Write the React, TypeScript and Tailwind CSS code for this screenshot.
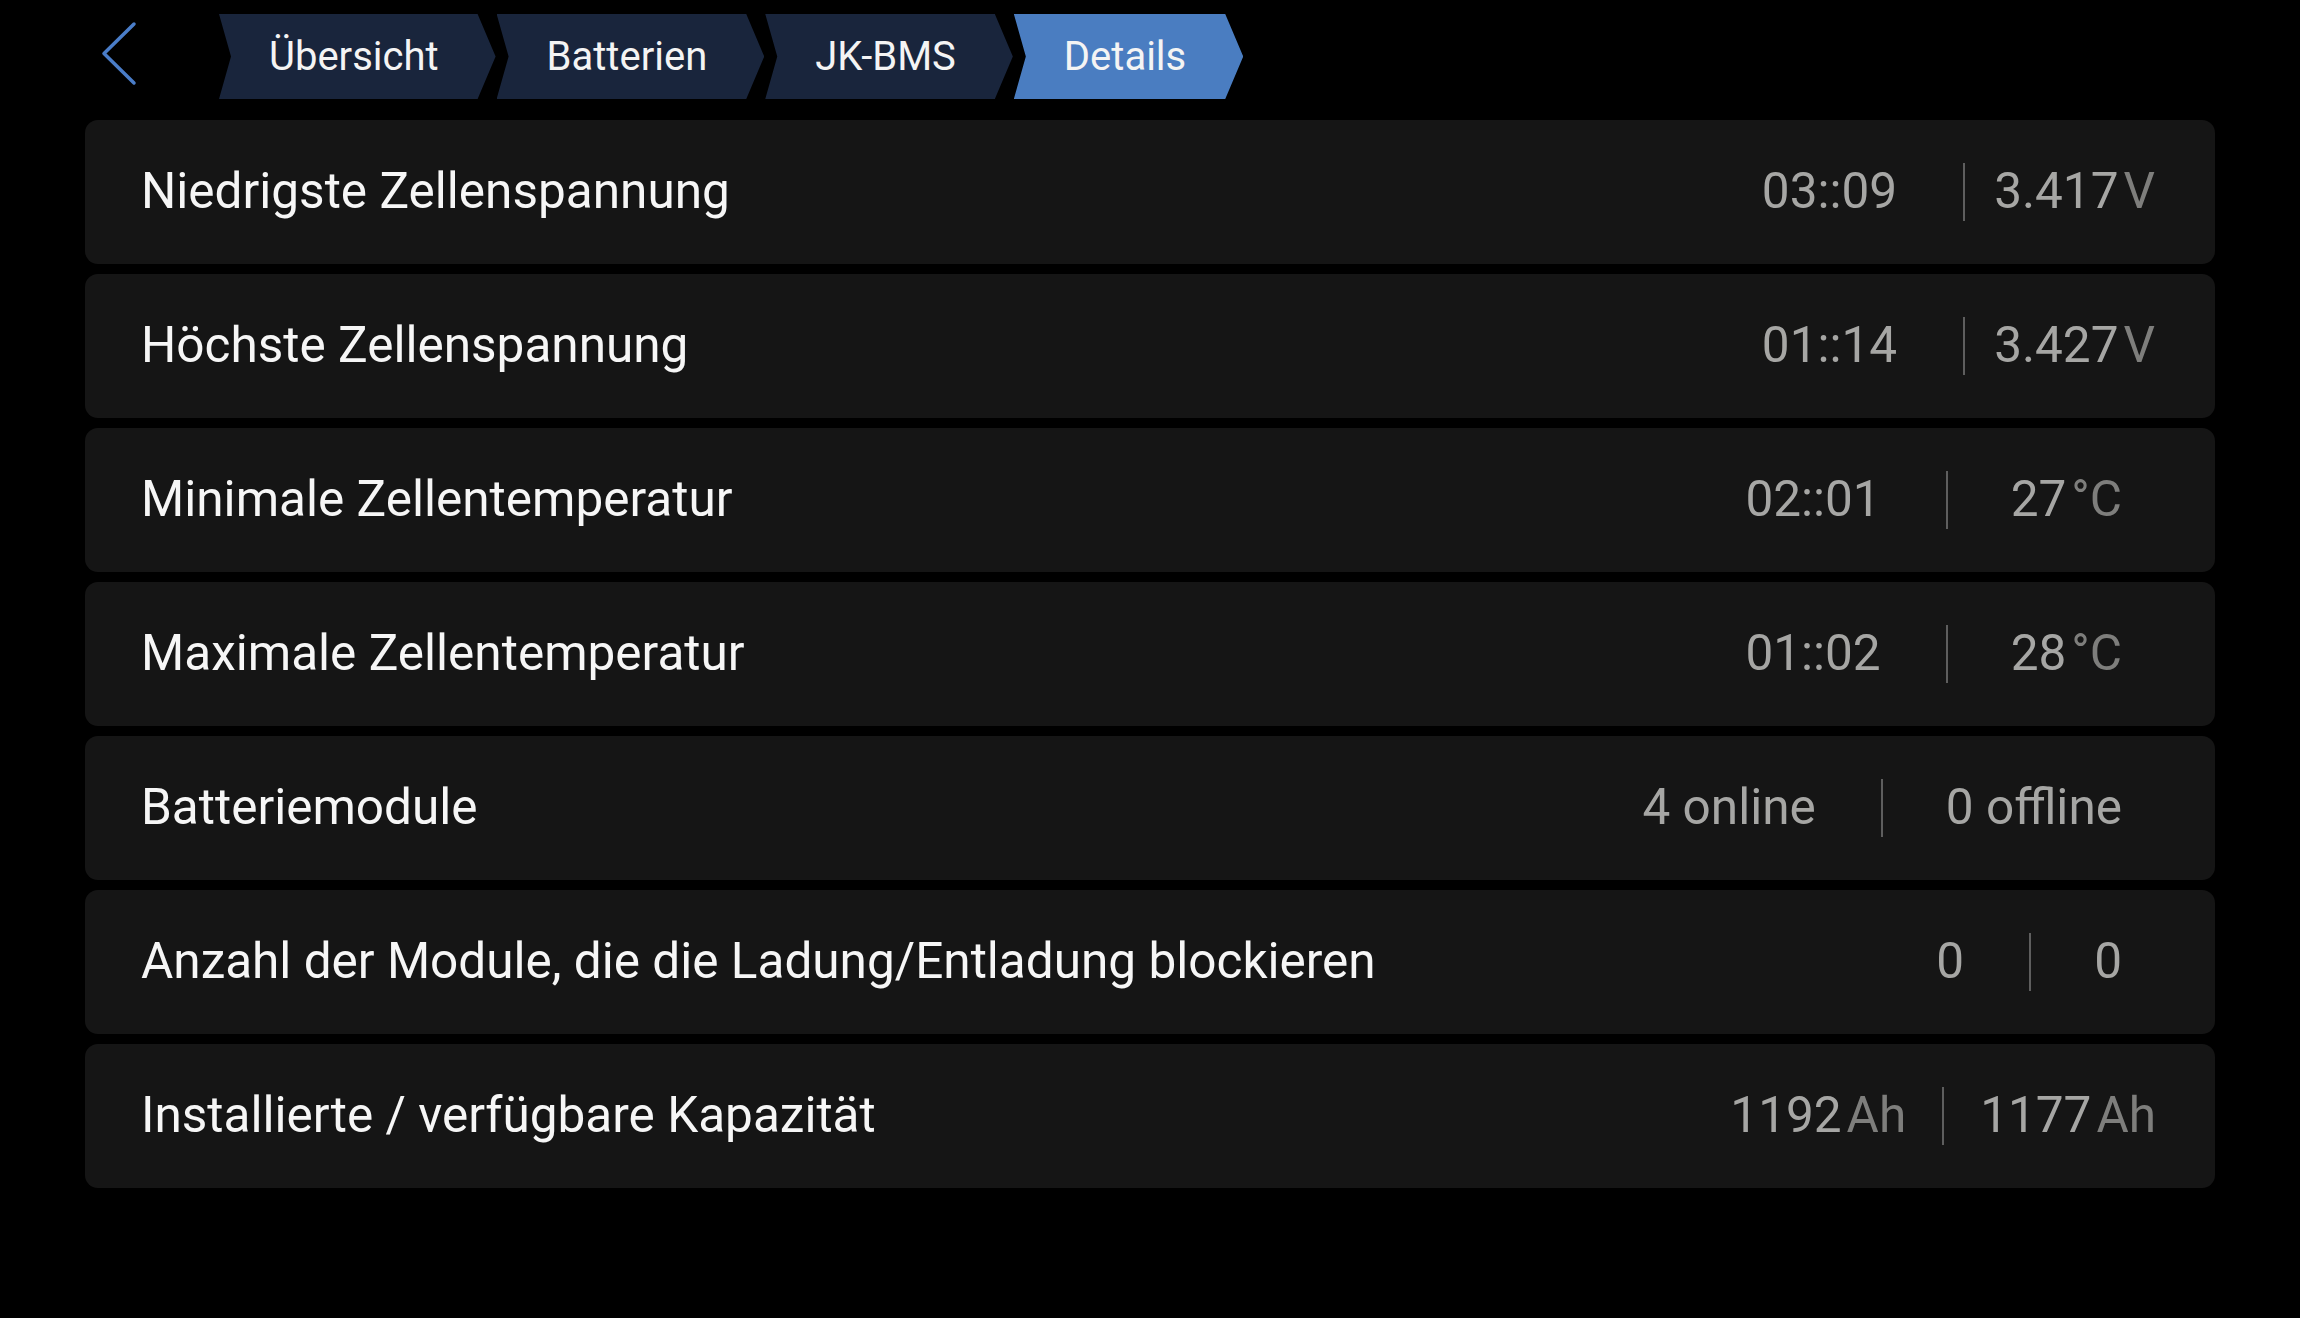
import React from 'react';

type Row = {
  label: string;
  a: string;
  aUnit?: string;
  b: string;
  bUnit?: string;
  // spacing around the divider and the right inset of the value group
  pad: string;
  gapL: string;
  gapR: string;
};

const ROWS: Row[] = [
  { label: 'Niedrigste Zellenspannung', a: '03::09', b: '3.417', bUnit: 'V', pad: 'pr-[60px]', gapL: 'ml-[66px]', gapR: 'mr-[29px]' },
  { label: 'Höchste Zellenspannung', a: '01::14', b: '3.427', bUnit: 'V', pad: 'pr-[60px]', gapL: 'ml-[66px]', gapR: 'mr-[29px]' },
  { label: 'Minimale Zellentemperatur', a: '02::01', b: '27', bUnit: '°C', pad: 'pr-[93px]', gapL: 'ml-[65px]', gapR: 'mr-[63px]' },
  { label: 'Maximale Zellentemperatur', a: '01::02', b: '28', bUnit: '°C', pad: 'pr-[93px]', gapL: 'ml-[65px]', gapR: 'mr-[63px]' },
  { label: 'Batteriemodule', a: '4 online', b: '0 offline', pad: 'pr-[93px]', gapL: 'ml-[65px]', gapR: 'mr-[63px]' },
  { label: 'Anzahl der Module, die die Ladung/Entladung blockieren', a: '0', b: '0', pad: 'pr-[93px]', gapL: 'ml-[65px]', gapR: 'mr-[63px]' },
  { label: 'Installierte / verfügbare Kapazität', a: '1192', aUnit: 'Ah', b: '1177', bUnit: 'Ah', pad: 'pr-[59px]', gapL: 'ml-[36px]', gapR: 'mr-[36px]' },
];

const CRUMBS = ['Übersicht', 'Batterien', 'JK-BMS', 'Details'];

function Value({ n, unit }: { n: string; unit?: string }) {
  return (
    <span className="whitespace-nowrap text-[#a6a6a4]">
      {n}
      {unit && (
        <span className={`${unit === 'V' ? 'ml-[5px]' : 'ml-[5px]'} text-[#7e7e7c]`}>{unit}</span>
      )}
    </span>
  );
}

function Crumb({ text, active }: { text: string; active: boolean }) {
  return (
    <div
      className={`flex h-[85px] items-center pl-[50px] pr-[57px] text-[40px] text-[#f4f4f4] [clip-path:polygon(0_0,calc(100%_-_18px)_0,100%_50%,calc(100%_-_18px)_100%,0_100%,12px_50%)] ${
        active ? 'bg-[#4a7dc1]' : 'bg-[#19253c]'
      }`}
    >
      {text}
    </div>
  );
}

export default function App() {
  return (
    <div className="min-h-screen w-full bg-black pt-[14px] font-['Roboto','Liberation_Sans',sans-serif] text-white">
      {/* Breadcrumb bar */}
      <header className="flex h-[85px] items-center">
        <button className="ml-[100px] mr-[81px] -mt-[8px] flex h-[66px] w-[38px] items-center">
          <svg width="38" height="66" viewBox="0 0 38 66" fill="none">
            <polyline
              points="34,4 4,33.5 34,63"
              stroke="#4a7dc8"
              strokeWidth="3.5"
              strokeLinecap="round"
              strokeLinejoin="round"
            />
          </svg>
        </button>
        <nav className="flex gap-[1px]">
          {CRUMBS.map((c, i) => (
            <Crumb key={c} text={c} active={i === CRUMBS.length - 1} />
          ))}
        </nav>
      </header>

      {/* Detail rows */}
      <div className="mt-[21px] flex flex-col gap-[10px] px-[85px]">
        {ROWS.map((r) => (
          <div
            key={r.label}
            className={`flex h-[144px] items-center rounded-[13px] bg-[#151515] pl-[56px] text-[49.5px] leading-none ${r.pad}`}
          >
            <span className="flex-1 text-[#f6f6f6]">{r.label}</span>
            <Value n={r.a} unit={r.aUnit} />
            <span className={`h-[58px] w-[2px] bg-[#5e5e5e] ${r.gapL} ${r.gapR}`} />
            <Value n={r.b} unit={r.bUnit} />
          </div>
        ))}
      </div>
    </div>
  );
}
